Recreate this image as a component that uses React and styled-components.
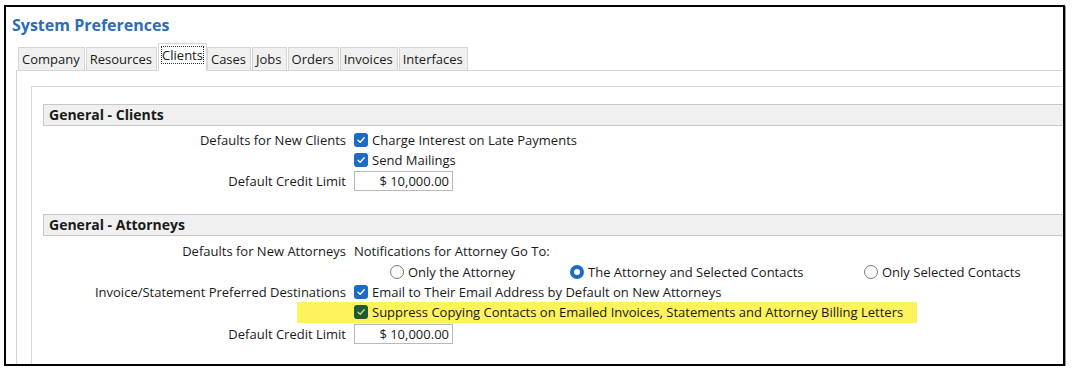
import React from 'react';
import styled, { createGlobalStyle } from 'styled-components';

const GlobalStyle = createGlobalStyle`
  html, body {
    margin: 0;
    padding: 0;
    background: #ffffff;
  }
  body {
    font-family: "Open Sans", "Noto Sans", Arial, sans-serif;
    font-size: 13px;
    color: #1a1a1a;
  }
`;

const Frame = styled.div`
  box-sizing: border-box;
  width: 1061px;
  height: 361px;
  margin: 5px 0 0 4px;
  border: 2px solid #000;
  box-shadow: 1px 1px 0 #9a9a9a;
  overflow: hidden;
  background: #fff;
`;

const Title = styled.h1`
  margin: 8px 0 0 6px;
  font-size: 16px;
  line-height: 20px;
  font-weight: 700;
  color: #2d6db7;
`;

const TabStrip = styled.div`
  display: flex;
  align-items: flex-end;
  height: 27px;
  margin: 9px 0 -1px 10px;
  padding-left: 2px;
  position: relative;
  z-index: 1;
`;

const Tab = styled.div`
  box-sizing: border-box;
  height: ${(p) => (p.active ? '28px' : '24px')};
  padding: ${(p) => (p.active ? '2px 2px 0' : '2px 4px 0 3px')};
  margin-right: ${(p) => (p.active ? '0' : '1px')};
  background: ${(p) => (p.active ? '#ffffff' : '#f0f0f0')};
  border: 1px solid #d6d6d6;
  border-bottom: ${(p) => (p.active ? '1px solid #fff' : '1px solid #d6d6d6')};
  line-height: 19px;
  white-space: nowrap;
`;

const FocusText = styled.span`
  display: inline-block;
  line-height: 18px;
  padding: 0 1px;
  outline: 1px dotted #333;
  outline-offset: -1px;
`;

const Panel = styled.div`
  width: 1100px;
  height: 400px;
  margin-left: 10px;
  padding: 15px 0 0 14px;
  border: 1px solid #d4d4d4;
`;

const InnerBox = styled.div`
  height: 400px;
  padding: 17px 0 0 11px;
  border: 1px solid #d8d8d8;
`;

const SectionHeader = styled.div`
  box-sizing: border-box;
  height: 22px;
  padding-left: 5px;
  background: #f0f0f0;
  border: 1px solid #c8c8c8;
  border-right: none;
  font-size: 14px;
  font-weight: 700;
  line-height: 20px;
  color: #1a1a1a;
`;

const SectionBody = styled.div`
  display: grid;
  grid-template-columns: 303px 1fr;
  grid-template-rows: ${(p) => p.$rows};
  column-gap: 8px;
  padding-top: 4px;
  margin-bottom: ${(p) => p.$gap || 0}px;
`;

const Label = styled.div`
  display: flex;
  align-items: center;
  justify-content: flex-end;
  white-space: nowrap;
`;

const Value = styled.div`
  display: flex;
  align-items: center;
  white-space: nowrap;
`;

const CheckBox = styled.span`
  box-sizing: border-box;
  display: inline-flex;
  align-items: center;
  justify-content: center;
  flex: none;
  width: 14px;
  height: 14px;
  margin-right: 4px;
  border-radius: 3px;
  background: ${(p) => (p.$tint ? '#1f5a36' : '#1d6cc4')};
`;

const CheckMark = ({ color }) => (
  <svg width="10" height="10" viewBox="0 0 10 10">
    <path d="M2 5.2 L4.2 7.3 L8.2 2.8" fill="none" stroke={color} strokeWidth="1.3" strokeLinecap="round" strokeLinejoin="round" />
  </svg>
);

const Check = ({ children }) => (
  <Value>
    <CheckBox>
      <CheckMark color="#ffffff" />
    </CheckBox>
    {children}
  </Value>
);

const Highlight = styled.div`
  display: flex;
  align-items: center;
  height: 21px;
  margin-left: -57px;
  padding: 0 14px 0 57px;
  background: #fdf35c;
`;

const MoneyInput = styled.div`
  box-sizing: border-box;
  width: 99px;
  height: 20px;
  padding-right: 3px;
  border: 1px solid #b9b9b9;
  text-align: right;
  line-height: 18px;
  background: #fff;
`;

const RadioRow = styled.div`
  display: flex;
  align-items: center;
  padding-left: 36px;
`;

const RadioOption = styled.div`
  display: flex;
  align-items: center;
  width: ${(p) => p.$w || 'auto'};
  white-space: nowrap;
`;

const RadioDot = styled.span`
  box-sizing: border-box;
  display: inline-block;
  flex: none;
  width: 14px;
  height: 14px;
  margin-right: 4px;
  border-radius: 50%;
  background: ${(p) => (p.$on ? '#ffffff' : '#fbfbfb')};
  border: ${(p) => (p.$on ? '4px solid #1d6cc4' : '1px solid #7a7a7a')};
`;

const Radio = ({ on, w, children }) => (
  <RadioOption $w={w}>
    <RadioDot $on={on} />
    {children}
  </RadioOption>
);

const tabs = ['Company', 'Resources', 'Clients', 'Cases', 'Jobs', 'Orders', 'Invoices', 'Interfaces'];

export default function App() {
  return (
    <>
      <GlobalStyle />
      <Frame>
        <Title>System Preferences</Title>
        <TabStrip>
          {tabs.map((t) =>
            t === 'Clients' ? (
              <Tab key={t} active>
                <FocusText>{t}</FocusText>
              </Tab>
            ) : (
              <Tab key={t}>{t}</Tab>
            )
          )}
        </TabStrip>
        <Panel>
          <InnerBox>
            <SectionHeader>General - Clients</SectionHeader>
            <SectionBody $rows="20px 20px 22px" $gap={22}>
              <Label>Defaults for New Clients</Label>
              <Check>Charge Interest on Late Payments</Check>
              <Label />
              <Check>Send Mailings</Check>
              <Label>Default Credit Limit</Label>
              <Value>
                <MoneyInput>$ 10,000.00</MoneyInput>
              </Value>
            </SectionBody>

            <SectionHeader>General - Attorneys</SectionHeader>
            <SectionBody $rows="21px 21px 19px 22px 22px">
              <Label>Defaults for New Attorneys</Label>
              <Value>Notifications for Attorney Go To:</Value>
              <Label />
              <RadioRow>
                <Radio w="180px">Only the Attorney</Radio>
                <Radio on w="294px">The Attorney and Selected Contacts</Radio>
                <Radio>Only Selected Contacts</Radio>
              </RadioRow>
              <Label>Invoice/Statement Preferred Destinations</Label>
              <Check>Email to Their Email Address by Default on New Attorneys</Check>
              <Label />
              <Value>
                <Highlight>
                  <CheckBox $tint>
                    <CheckMark color="#cfe07a" />
                  </CheckBox>
                  Suppress Copying Contacts on Emailed Invoices, Statements and Attorney Billing Letters
                </Highlight>
              </Value>
              <Label>Default Credit Limit</Label>
              <Value>
                <MoneyInput>$ 10,000.00</MoneyInput>
              </Value>
            </SectionBody>
          </InnerBox>
        </Panel>
      </Frame>
    </>
  );
}
